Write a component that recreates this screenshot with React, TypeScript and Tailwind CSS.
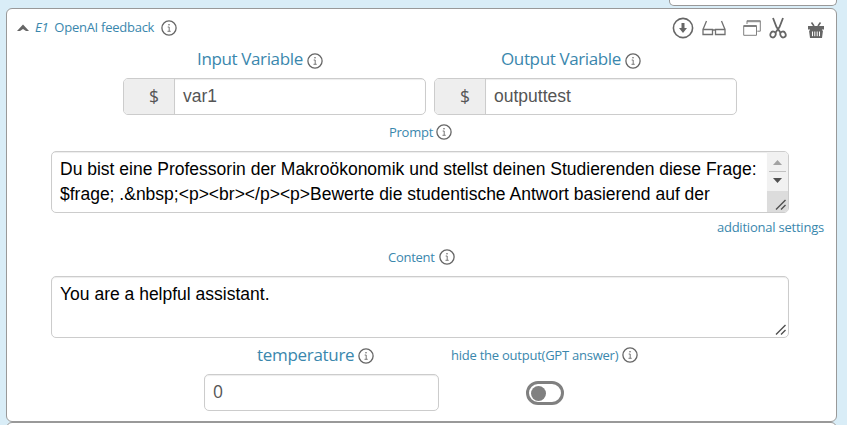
import React from "react";

function Info() {
  return (
    <svg className="block h-4 w-4 shrink-0" viewBox="0 0 16 16" fill="none" stroke="#666">
      <circle cx="8" cy="8" r="7.1" strokeWidth="1.3" />
      <path d="M6.7 7H8.2V11M6.5 11.3H9.7" strokeWidth="0.9" />
      <circle cx="8" cy="4.7" r="0.8" fill="#666" stroke="none" />
    </svg>
  );
}

function Grip() {
  return (
    <svg className="block h-3 w-3" viewBox="0 0 12 12" stroke="#505050" strokeWidth="1.4" fill="none">
      <path d="M1 10.5L10.5 1M6 10.5L10.5 6" />
    </svg>
  );
}

function Label({ children, className = "" }: { children: React.ReactNode; className?: string }) {
  return (
    <div className={"flex items-center whitespace-nowrap text-[#3a87ad] " + className}>
      {children}
    </div>
  );
}

function VariableField({ label, value, labelClass }: { label: string; value: string; labelClass: string }) {
  return (
    <div className="w-[303px]">
      <Label className={"h-8 gap-1 pb-[3px] text-[17px] tracking-[-0.37px] " + labelClass}>
        <span className="-mt-[3px]">{label}</span>
        <Info />
      </Label>
      <div className="flex h-[37px] overflow-hidden rounded-[5px] border border-[#ccc] bg-white">
        <div className="flex w-[51px] items-center border-r border-[#ccc] bg-[#eee] pb-px pl-[25px] text-[17.5px] text-[#555]">$</div>
        <div className="flex flex-1 items-center pb-px pl-2 font-['Liberation_Sans',sans-serif] text-[17.5px] text-[#555] shadow-[inset_0_1px_1px_rgba(0,0,0,.075)]">{value}</div>
      </div>
    </div>
  );
}

export default function App() {
  return (
    <div className="h-[425px] w-[847px] overflow-hidden bg-[#d9edf7] font-['Open_Sans',sans-serif]">
      <div className="ml-[669px] h-1.5 w-[168px] rounded-b-[5px] border border-t-0 border-[#999] bg-white" />
      <section className="mt-0.5 ml-1.5 h-[414px] w-[831px] rounded-[6px] border border-[#999] bg-white">
        <header className="flex h-[37px] items-center pl-[10px] text-[13px] tracking-[-0.26px] text-[#3a87ad]">
          <svg className="h-2 w-3" viewBox="0 0 12 8"><path d="M0 7L6 .5L12 7L9 7L6 5L3 7Z" fill="#666" /></svg>
          <i className="mt-px ml-[6px]">E1</i>
          <span className="mt-px mr-[7px] ml-[6px]">OpenAI feedback</span>
          <Info />
          <div className="mt-px mr-[12px] ml-auto flex items-center">
            <svg className="h-[22px] w-[22px]" viewBox="0 0 22 22" fill="none" stroke="#666">
              <circle cx="11" cy="11" r="9.6" strokeWidth="1.6" />
              <path d="M9.5 6h3v5h2.5l-4 5-4-5h2.5z" fill="#666" stroke="none" />
            </svg>
            <svg className="ml-2 h-4 w-6" viewBox="0 0 24 16" fill="none" stroke="#707070" strokeWidth="1.3">
              <path d="M1 9.5h9.5v5H1zM13.5 9.5H23v5h-9.5zM10.5 10h3M1 9.5L4.5 1M23 9.5L19.5 1" />
            </svg>
            <svg className="ml-[17px] h-4 w-[18px]" viewBox="0 0 18 16" fill="none" stroke="#808080" strokeWidth="1">
              <path d="M.7 5.5h12.8v9.8H.7zM.7 6.5h12.8M4 4V.7h13.3v10.5h-3M4 1.7h13.3" />
            </svg>
            <svg className="ml-2 h-[22px] w-[18px]" viewBox="0 0 18 22" fill="none" stroke="#666">
              <path d="M4 1l3.5 9 4.3 6M14 1l-3.5 9-4.3 6" strokeWidth="1.8" />
              <ellipse cx="4" cy="17.5" rx="2.6" ry="3" strokeWidth="1.8" transform="rotate(25 4 17.5)" />
              <ellipse cx="14" cy="17.5" rx="2.6" ry="3" strokeWidth="1.8" transform="rotate(-25 14 17.5)" />
            </svg>
            <svg className="mt-[3px] ml-[21px] h-4 w-4" viewBox="0 0 16 16" fill="none">
              <path d="M0 4h16v3.5H0zM1 8.5h14l-1 7.5H2zM2 7h12v2H2z" fill="#666" />
              <path d="M3.5.5L6 4M12.5.5L10 4" stroke="#666" strokeWidth="1.6" />
              <path d="M4.5 9.5v4.7M6.8 9.5v4.7M9.2 9.5v4.7M11.5 9.5v4.7" stroke="#fff" />
            </svg>
          </div>
        </header>

        <div className="flex gap-2 pl-[116px]">
          <VariableField label="Input Variable" value="var1" labelClass="pl-[74px]" />
          <VariableField label="Output Variable" value="outputtest" labelClass="pl-[67px]" />
        </div>

        <Label className="h-9 gap-[3px] pb-[2px] pl-[382px] text-[13px] tracking-[-0.26px]"><span className="mt-[2px]">Prompt</span><Info /></Label>

        <div className="ml-11 flex h-[62px] w-[738px] overflow-hidden rounded-[5px] border border-[#ccc] text-black">
          <div className="min-w-0 flex-1 pt-[5px] pl-2 font-['Liberation_Sans',sans-serif] text-[17.5px] leading-[25px] whitespace-nowrap shadow-[inset_0_1px_1px_rgba(0,0,0,.075)]">
            <div>Du bist eine Professorin der Makroökonomik und stellst deinen Studierenden diese Frage:</div>
            <div>{"$frage; .&nbsp;<p><br></p><p>Bewerte die studentische Antwort basierend auf der"}</div>
          </div>
          <div className="flex w-[21px] shrink-0 flex-col bg-[#f1f1f1]">
            <svg className="h-[39px] w-[21px]" viewBox="0 0 21 39">
              <path d="M6 13L10.5 8L15 13Z" fill="#a3a3a3" />
              <path d="M2 19.5H19" stroke="#c1c1c1" />
              <path d="M6 26H15L10.5 31Z" fill="#505050" />
            </svg>
            <div className="flex flex-1 items-end justify-end bg-[#dcdcdc] pr-px pb-px"><Grip /></div>
          </div>
        </div>

        <div className="flex h-[27px] items-center justify-end pt-[2px] pr-3 text-[13px] tracking-[-0.22px] text-[#3a87ad]"><span>additional settings</span></div>
        <Label className="h-9 gap-1 pb-0.5 pl-[381px] text-[13px] tracking-[-0.26px]"><span className="mt-[2px]">Content</span><Info /></Label>

        <div className="ml-11 flex h-[62px] w-[738px] items-end rounded-[5px] border border-[#ccc] pr-px pb-px text-black shadow-[inset_0_1px_1px_rgba(0,0,0,.075)]">
          <div className="flex-1 self-start pt-[5px] pl-2 font-['Liberation_Sans',sans-serif] text-[17.5px] leading-[25px]">You are a helpful assistant.</div>
          <Grip />
        </div>

        <div className="flex">
          <div className="ml-[197px] w-[235px]">
            <Label className="h-9 gap-1 pl-[53px] text-[17px] tracking-[-0.3px]"><span className="-mt-[2px]">temperature</span><Info /></Label>
            <div className="flex h-[37px] items-center rounded-[5px] border border-[#ccc] pb-[2px] pl-2 text-[17.5px] text-[#555] shadow-[inset_0_1px_1px_rgba(0,0,0,.075)]">0</div>
          </div>
          <div className="ml-3 w-[200px]">
            <Label className="h-9 gap-1 pb-0.5 text-[13px] tracking-[-0.24px]"><span className="mt-[2px]">hide the output(GPT answer)</span><Info /></Label>
            <div className="mt-[7px] ml-[75px] flex h-6 w-[38px] items-center rounded-full border-[3px] border-[#808080] pl-[2px]">
              <div className="h-[15px] w-[15px] rounded-full bg-[#808080]" />
            </div>
          </div>
        </div>
      </section>
      <div className="ml-1.5 h-5 w-[831px] rounded-t-[6px] border border-[#999] bg-white" />
    </div>
  );
}
